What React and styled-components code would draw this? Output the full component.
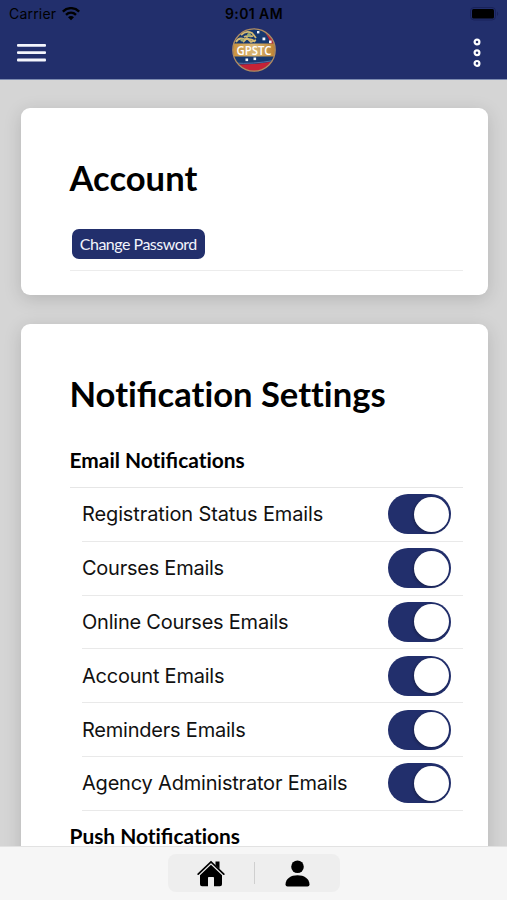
import React, { useState } from "react";
import styled, { createGlobalStyle } from "styled-components";

const GlobalStyle = createGlobalStyle`
  * {
    box-sizing: border-box;
  }
  body {
    margin: 0;
    overflow: hidden;
  }
`;

const Screen = styled("div")`
  display: flex;
  flex-direction: column;
  width: 507px;
  height: 900px;
  overflow: hidden;
  background: #d5d5d5;
  color: #000000;
  font-family: "Inter", sans-serif;
`;

const Header = styled("header")`
  flex: none;
  height: 80px;
  background: #222f6c;
  border-bottom: 1px solid #7d8bb0;
`;

const StatusBar = styled("div")`
  display: grid;
  grid-template-columns: 1fr auto 1fr;
  align-items: center;
  height: 27px;
  padding: 0 8px 0 9px;
  font-size: 14px;
  line-height: 27px;
`;

const Carrier = styled("div")`
  display: flex;
  align-items: center;
  gap: 6px;
  letter-spacing: 0.2px;
`;

const Time = styled("div")`
  font-weight: 600;
  letter-spacing: 0.4px;
`;

const Battery = styled("div")`
  display: flex;
  justify-content: flex-end;
`;

const NavBar = styled("nav")`
  display: grid;
  grid-template-columns: 1fr auto 1fr;
  align-items: center;
  height: 46px;
  padding: 0 17px;
`;

const MenuButton = styled("button")`
  display: flex;
  justify-self: start;
  margin-top: 6px;
  padding: 0;
  border: none;
  background: none;
`;

const MoreButton = styled(MenuButton)`
  justify-self: end;
  margin: 5px 9.5px 0 0;
`;

const Content = styled("main")`
  flex: 1;
  min-height: 0;
  display: flex;
  flex-direction: column;
  gap: 29px;
  padding: 28px 19.5px 0 20.5px;
  overflow: hidden;
`;

const Card = styled("section")`
  flex: none;
  height: ${(props) => props.$height}px;
  padding: 0 24.5px 0 49px;
  border-radius: 9px;
  background: #ffffff;
  box-shadow: 0 4px 18px rgba(0, 0, 0, 0.15);
`;

const Title = styled("h1")`
  margin: 0;
  padding-top: 48px;
  font-family: "Lato", sans-serif;
  font-size: 34.6px;
  font-weight: 700;
  line-height: 44px;
  white-space: nowrap;
  font-variant-ligatures: none;
`;

const Ligature = styled("span")`
  font-variant-ligatures: normal;
`;

const ButtonRow = styled("div")`
  height: 71px;
  padding: 29px 0 0 2px;
  border-bottom: 1px solid #ececec;
`;

const PasswordButton = styled("button")`
  display: block;
  width: 133.5px;
  height: 29.5px;
  padding: 0;
  border: none;
  border-radius: 7px;
  background: #222f6c;
  color: #f2f4fb;
  font-family: "Lato", sans-serif;
  font-size: 16px;
  line-height: 29px;
  letter-spacing: -0.5px;
  white-space: nowrap;
`;

const GroupTitle = styled("h2")`
  margin: 0;
  padding-top: ${(props) => props.$top}px;
  font-family: "Lato", sans-serif;
  font-size: 20.9px;
  font-weight: 700;
  line-height: 26px;
  white-space: nowrap;
  font-variant-ligatures: none;
`;

const SettingList = styled("ul")`
  margin: 14px 0 0;
  padding: 1px 0 0 12.5px;
  list-style: none;
  background: linear-gradient(#e6e6e6, #e6e6e6) 0 0 / 100% 1px no-repeat;
`;

const SettingRow = styled("li")`
  display: flex;
  align-items: center;
  justify-content: space-between;
  height: 53.8px;
  padding-right: 12px;
  border-bottom: 1px solid #e9e9e9;
`;

const SettingLabel = styled("span")`
  font-size: 20px;
  line-height: 26px;
  letter-spacing: ${(props) => props.$spacing}px;
  color: #111111;
  white-space: nowrap;
`;

const Toggle = styled("button")`
  display: flex;
  align-items: center;
  justify-content: ${(props) => (props.$on ? "flex-end" : "flex-start")};
  width: 63px;
  height: 40px;
  padding: 0 2px;
  border: none;
  border-radius: 20px;
  background: ${(props) => (props.$on ? "#222f6c" : "#e5e5e5")};
`;

const Knob = styled("span")`
  width: 35px;
  height: 35px;
  border-radius: 50%;
  background: #ffffff;
  box-shadow: -1px 1px 3px rgba(0, 0, 0, 0.3);
`;

const TabBar = styled("footer")`
  flex: none;
  display: flex;
  justify-content: center;
  height: 54px;
  padding: 7px 0 0 1px;
  border-top: 1px solid #e2e2e2;
  background: #f6f6f6;
`;

const TabGroup = styled("div")`
  display: grid;
  grid-template-columns: 1fr 1px 1fr;
  align-items: center;
  justify-items: center;
  width: 172px;
  height: 38px;
  border-radius: 8px;
  background: #eeeeee;
`;

const TabDivider = styled("div")`
  width: 1px;
  height: 22px;
  background: #cfcfcf;
`;

function WifiIcon() {
  return (
    <svg width="18" height="14" viewBox="0 0 18 14" fill="none" stroke="#000" strokeWidth="2.4">
      <path d="M.8 4.6C5.5 0 12.5 0 17.2 4.6" />
      <path d="M4 7.8c2.9-2.8 7.1-2.8 10 0" />
      <path d="M9 13.2 6 10.2c1.7-1.5 4.3-1.5 6 0z" fill="#000" stroke="none" />
    </svg>
  );
}

function BatteryIcon() {
  return (
    <svg width="29" height="14" viewBox="0 0 29 14">
      <rect x="0.5" y="0.5" width="25" height="12.5" rx="3.5" fill="none" stroke="#19225a" />
      <rect x="2" y="2" width="22" height="9.5" rx="1.5" fill="#000" />
      <path d="M27 4.5c1.6.8 1.6 3.7 0 4.5z" fill="#19225a" />
    </svg>
  );
}

function Logo() {
  return (
    <svg width="46" height="46" viewBox="0 0 46 46">
      <defs>
        <clipPath id="seal">
          <circle cx="23" cy="23" r="21" />
        </clipPath>
        <linearGradient id="band">
          <stop offset="0" stopColor="#c98d35" />
          <stop offset="0.5" stopColor="#d9b877" />
          <stop offset="1" stopColor="#b97c2c" />
        </linearGradient>
      </defs>
      <g clipPath="url(#seal)">
        <rect width="46" height="46" fill="#17386f" />
        <path d="M34 6c5 3 8 6 9 11h-4c0-4-2-7-5-11z" fill="#b4283a" />
        <path d="M0 37c14 1 28 0 46-3v12H0z" fill="#c42336" />
        <path d="M3 36c13 1 25 0 40-2.500" fill="none" stroke="#5470a3" strokeWidth="1" />
        <g fill="none" stroke="#d4ba72" strokeWidth="1.8">
          <path d="M5 15c2-4 5-4 8-3s7-2 11 3" />
          <path d="M10 8c3-3 7-4 11-2l4 5" />
          <path d="M13 10c3-2 6 0 9-1M12 15l4-4 4 4 5-2" />
        </g>
        <circle cx="18" cy="8" r="2" fill="#9cad76" />
        <circle cx="11" cy="13" r="1.6" fill="#9cad76" />
        <rect y="16.5" width="46" height="13" fill="url(#band)" />
      </g>
      <g fill="#f4f6fb">
        <rect x="26" y="4" width="2.4" height="2.4" />
        <rect x="31.5" y="10.5" width="2.8" height="2.8" />
        <rect x="38" y="13.5" width="2.6" height="2.6" />
        <rect x="14.5" y="31.5" width="2.6" height="2.6" />
        <rect x="22.5" y="30.5" width="2.6" height="2.6" />
      </g>
      <circle cx="23" cy="23" r="21.2" fill="none" stroke="#b18d61" strokeWidth="1.3" />
      <text
        x="23"
        y="27.6"
        fill="#fff"
        fontFamily="Open Sans, sans-serif"
        fontSize="13"
        fontWeight="600"
        textAnchor="middle"
        textLength="35"
        lengthAdjust="spacingAndGlyphs"
      >
        GPSTC
      </text>
    </svg>
  );
}

function MenuIcon() {
  return (
    <svg width="29" height="18" viewBox="0 0 29 18" fill="#f4f6fd">
      <rect width="29" height="2.8" rx="1" />
      <rect y="7.3" width="29" height="2.8" rx="1" />
      <rect y="14.6" width="29" height="2.8" rx="1" />
    </svg>
  );
}

function MoreIcon() {
  return (
    <svg width="8" height="30" viewBox="0 0 8 30" fill="none" stroke="#fff" strokeWidth="2.2">
      <circle cx="4" cy="4" r="2.4" />
      <circle cx="4" cy="14.7" r="2.4" />
      <circle cx="4" cy="25.4" r="2.4" />
    </svg>
  );
}

function HomeIcon() {
  return (
    <svg width="28" height="27" viewBox="0 0 28 27">
      <path d="M18.5 1.500h4v7.500l-4-3.800z" />
      <path d="M1.2 14.200 14 2l12.800 12.200" fill="none" stroke="#000" strokeWidth="1.7" strokeLinecap="round" />
      <path d="M14 4.800 25 15.200V24.300q0 2-2 2H17v-8.500q0-.8-.8-.8h-4.400q-.8 0-.8.8v8.500H5q-2 0-2-2v-9.100z" />
    </svg>
  );
}

function PersonIcon() {
  return (
    <svg width="25" height="27" viewBox="0 0 25 27">
      <circle cx="12.5" cy="6.8" r="6.3" />
      <path d="M.5 24.500C.5 18.500 6 15.200 12.500 15.200s12 3.300 12 9.300q0 2-2 2h-20q-2 0-2-2z" />
    </svg>
  );
}

const emailSettings = [
  { name: "Registration Status Emails", spacing: -0.12 },
  { name: "Courses Emails", spacing: -0.25 },
  { name: "Online Courses Emails", spacing: -0.23 },
  { name: "Account Emails", spacing: -0.23 },
  { name: "Reminders Emails", spacing: -0.22 },
  { name: "Agency Administrator Emails", spacing: -0.2 },
];

function Setting({ name, spacing }) {
  const [isOn, setIsOn] = useState(true);
  const toggling = () => setIsOn(!isOn);

  return (
    <SettingRow>
      <SettingLabel $spacing={spacing}>{name}</SettingLabel>
      <Toggle $on={isOn} onClick={toggling} aria-label={name}>
        <Knob />
      </Toggle>
    </SettingRow>
  );
}

function App() {
  return (
    <Screen>
      <GlobalStyle />
      <Header>
        <StatusBar>
          <Carrier>
            Carrier
            <WifiIcon />
          </Carrier>
          <Time>9:01 AM</Time>
          <Battery>
            <BatteryIcon />
          </Battery>
        </StatusBar>
        <NavBar>
          <MenuButton aria-label="Menu">
            <MenuIcon />
          </MenuButton>
          <Logo />
          <MoreButton aria-label="More">
            <MoreIcon />
          </MoreButton>
        </NavBar>
      </Header>
      <Content>
        <Card $height={187}>
          <Title>Account</Title>
          <ButtonRow>
            <PasswordButton>Change Password</PasswordButton>
          </ButtonRow>
        </Card>
        <Card $height={600}>
          {/* Lato also joins "ti" and "tt", only "fi" should be joined */}
          <Title>
            Noti<Ligature>fi</Ligature>cation Settings
          </Title>
          <GroupTitle $top={31}>
            Email Noti<Ligature>fi</Ligature>cations
          </GroupTitle>
          <SettingList>
            {emailSettings.map((setting) => (
              <Setting key={setting.name} {...setting} />
            ))}
          </SettingList>
          <GroupTitle $top={12.5}>
            Push Noti<Ligature>fi</Ligature>cations
          </GroupTitle>
        </Card>
      </Content>
      <TabBar>
        <TabGroup>
          <HomeIcon />
          <TabDivider />
          <PersonIcon />
        </TabGroup>
      </TabBar>
    </Screen>
  );
}

export default App;
